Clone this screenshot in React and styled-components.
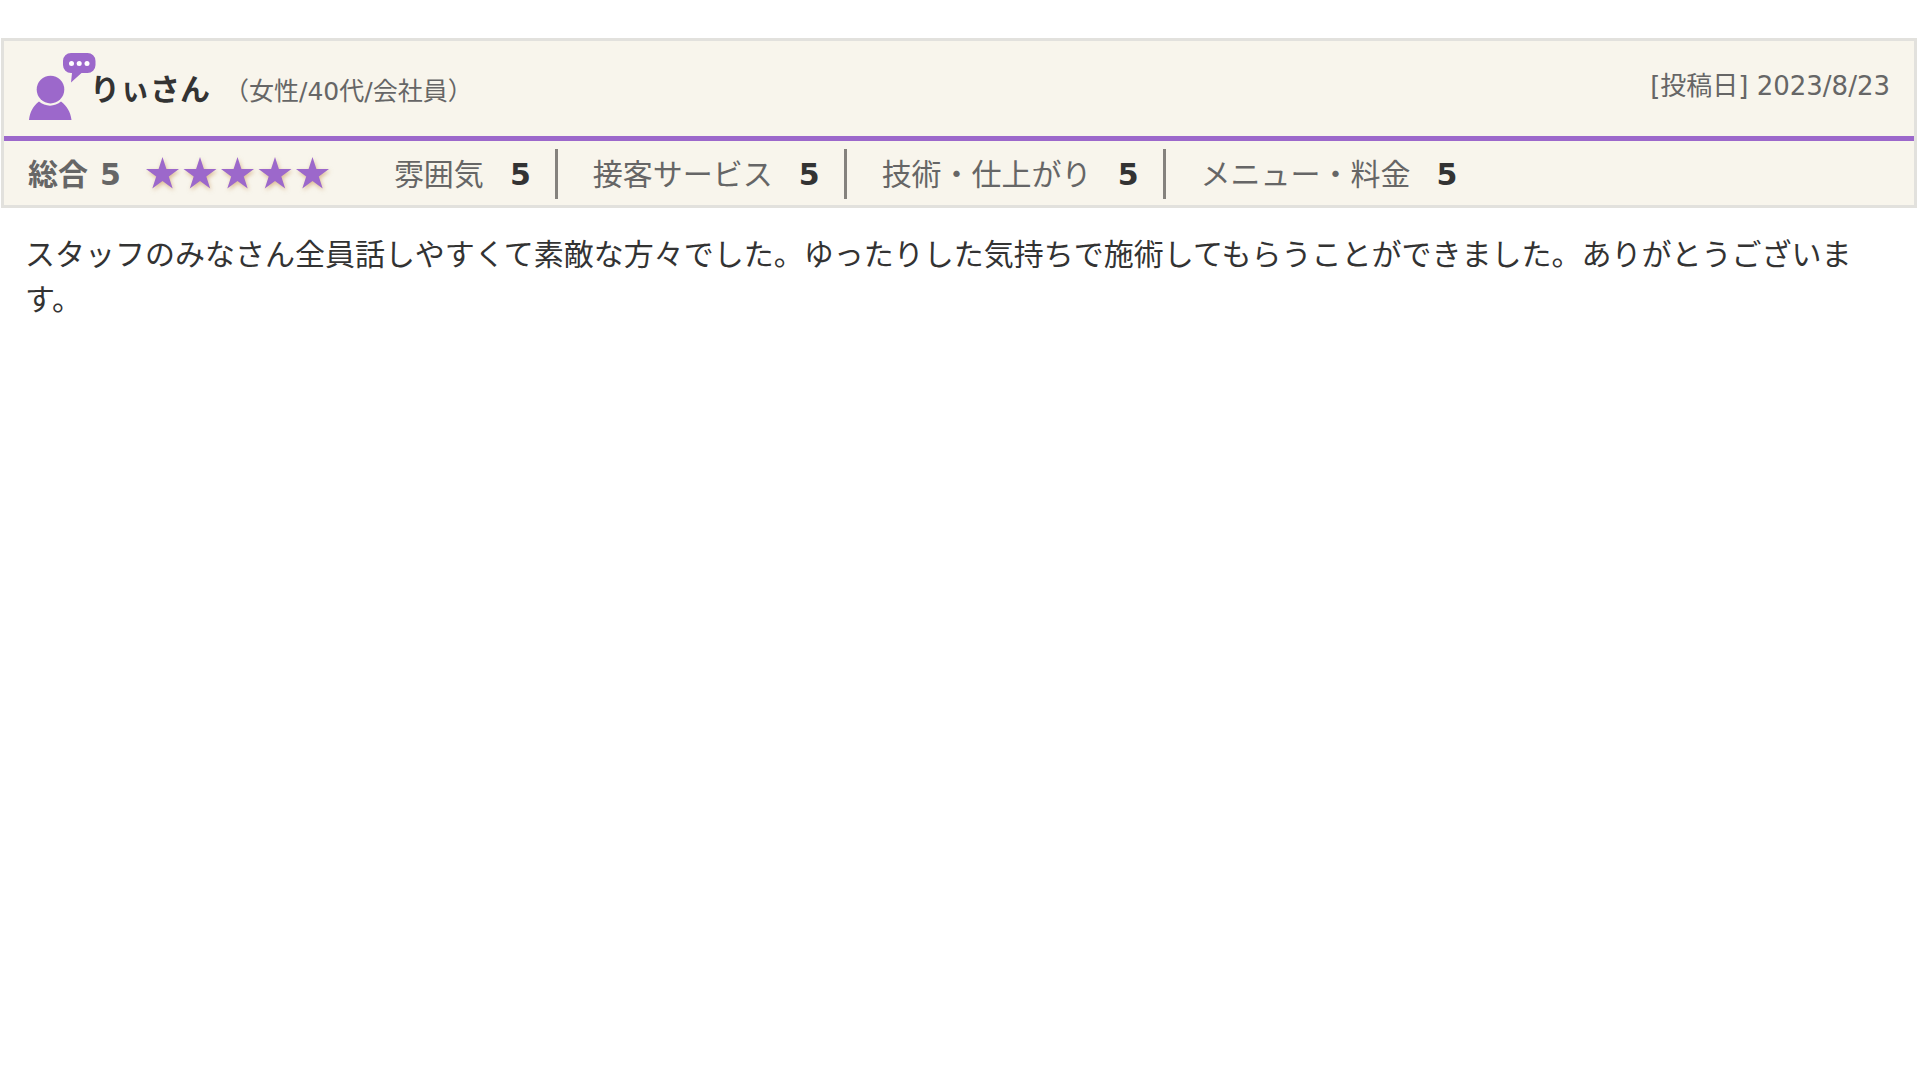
import React from 'react'
import styled, { createGlobalStyle } from 'styled-components'


const GlobalStyle = createGlobalStyle`
    body {
        margin: 0;
        background-color: #fff;
        color: #333;
        font-family: "DejaVu Sans", "Noto Sans CJK JP", sans-serif;
        font-size: 30px;
        line-height: 45px;
    }
`;

const Review = styled.article`
    padding: 38px 3px 0 1px;
`;

const ReviewHead = styled.header`
    background-color: #f8f5ec;
    border: 3px solid #e2e1dd;
`;

const UserRow = styled.div`
    display: flex;
    align-items: flex-start;
    padding: 10px 24px 13px;
    border-bottom: 5px solid #9c68cb;
`;

const Avatar = styled.svg`
    width: 62px;
    height: 72px;
    overflow: visible;
`;

const UserName = styled.h2`
    margin: 16px 0 0;
    font-size: 30px;
    font-weight: 700;
`;

const Profile = styled.span`
    margin: 18px 0 0 14px;
    font-size: 25px;
    color: #666;
`;

const PostDate = styled.time`
    margin: 13px 0 0 auto;
    font-size: 26px;
    color: #666;
`;

const RatingRow = styled.div`
    display: flex;
    align-items: center;
    padding: 8px 24px 6px;
`;

const Total = styled.div`
    display: flex;
    gap: 12px;
    margin-right: 22px;
    font-weight: 700;
    color: #666;
`;

const Stars = styled.svg`
    width: 192px;
    height: 40px;
    filter: drop-shadow(1px 2px 2px rgba(190, 130, 60, 0.5));
`;

const Scores = styled.ul`
    display: flex;
    margin: 0 0 0 24px;
    padding: 0;
    list-style: none;
`;

const Score = styled.li`
    display: flex;
    align-items: center;
    gap: 26px;
    height: 50px;
    padding: 0 24px 0 35px;
    border-right: ${props => props.$last ? 'none' : '3px solid #85827d'};
    color: #666;
`;

const Point = styled.b`
    color: #333;
`;

const Comment = styled.p`
    margin: 0;
    padding: 24px;
`;

const scores = [
    { label: '雰囲気', point: 5 },
    { label: '接客サービス', point: 5 },
    { label: '技術・仕上がり', point: 5 },
    { label: 'メニュー・料金', point: 5 },
];

const starX = [3, 40.5, 78, 115.5, 153];

function UserIcon() {
    return (
        <Avatar viewBox="0 0 62 72" fill="#9c68cb" aria-hidden="true">
            <path d="M1 69C2 61 5 55 11 50.500C17 56 27 56 33 50.500C39 55 42.500 61 43.500 69Z" />
            <circle cx="22.500" cy="38.600" r="13.800" />
            <path d="M43 2H59.500A8 8 0 0 1 67.500 10V14A8 8 0 0 1 59.500 22H53.500L43 31.500L44 22H43A8 8 0 0 1 35 14V10A8 8 0 0 1 43 2Z" />
            <g fill="#fff">
                <circle cx="43.500" cy="12.500" r="2.500" />
                <circle cx="51.200" cy="12.500" r="2.500" />
                <circle cx="59" cy="12.500" r="2.500" />
            </g>
        </Avatar>
    )
}

function App() {
    return (
        <>
            <GlobalStyle />
            <Review lang="ja">
                <ReviewHead>
                    <UserRow>
                        <UserIcon />
                        <UserName>りぃさん</UserName>
                        <Profile>（女性/40代/会社員）</Profile>
                        <PostDate dateTime="2023-08-23">[投稿日] 2023/8/23</PostDate>
                    </UserRow>
                    <RatingRow>
                        <Total><span>総合</span><span>5</span></Total>
                        <Stars viewBox="0 0 192 40" fill="#9c68cb" aria-hidden="true">
                            {starX.map(x => (
                                <path key={x} transform={`translate(${x} 3)`} d="M16.500 0L20.400 12H33L22.800 19.400L26.700 31.500L16.500 24L6.300 31.500L10.200 19.400L0 12H12.600Z" />
                            ))}
                        </Stars>
                        <Scores>
                            {scores.map((score, i) => (
                                <Score key={score.label} $last={i === scores.length - 1}>
                                    {score.label}
                                    <Point>{score.point}</Point>
                                </Score>
                            ))}
                        </Scores>
                    </RatingRow>
                </ReviewHead>
                <Comment>
                    スタッフのみなさん全員話しやすくて素敵な方々でした。ゆったりした気持ちで施術してもらうことができました。ありがとうございます。
                </Comment>
            </Review>
        </>
    )
}

export default App
